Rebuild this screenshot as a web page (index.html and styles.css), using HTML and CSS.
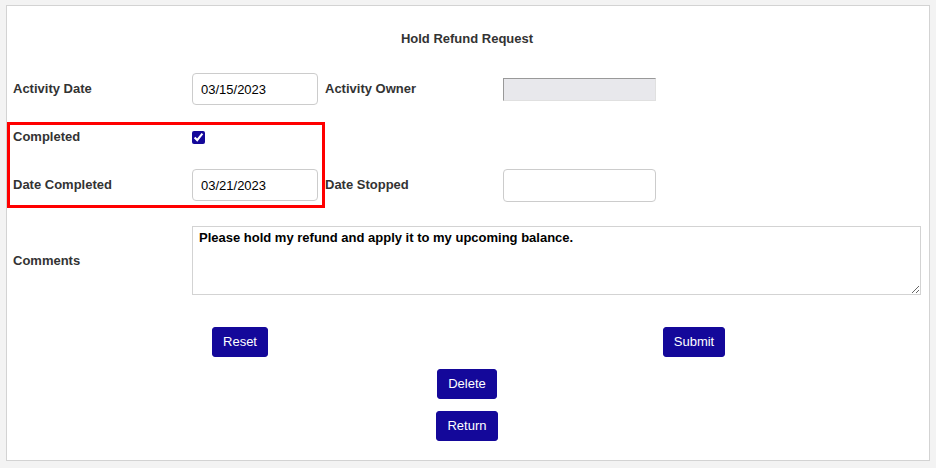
FILE: index.html
```html
<!DOCTYPE html>
<html>
<head>
<meta charset="utf-8">
<link rel="stylesheet" href="styles.css">
</head>
<body>
<div class="page">
  <div class="card">
    <div class="title">Hold Refund Request</div>
    <div class="form">
      <label class="lbl">Activity Date</label>
      <div class="cell"><input class="field date" type="text" value="03/15/2023"></div>
      <label class="lbl">Activity Owner</label>
      <div class="cell"><input class="field owner" type="text" readonly></div>

      <label class="lbl">Completed</label>
      <div class="cell"><input class="check" type="checkbox" checked></div>
      <div></div>
      <div></div>

      <label class="lbl">Date Completed</label>
      <div class="cell"><input class="field date" type="text" value="03/21/2023"></div>
      <label class="lbl">Date Stopped</label>
      <div class="cell"><input class="field stopped" type="text"></div>

      <label class="lbl comments-lbl">Comments</label>
      <div class="comments-cell"><textarea class="comments">Please hold my refund and apply it to my upcoming balance.</textarea></div>
    </div>
    <div class="actions">
      <div class="half"><button class="btn">Reset</button></div>
      <div class="half"><button class="btn">Submit</button></div>
    </div>
    <div class="center-row"><button class="btn">Delete</button></div>
    <div class="center-row"><button class="btn">Return</button></div>
    <div class="highlight"></div>
  </div>
</div>
</body>
</html>
```

FILE: styles.css
```css
html, body {
  margin: 0;
  padding: 0;
  background: #f3f3f3;
  font-family: "Liberation Sans", Arial, sans-serif;
}

.page {
  padding: 5px 6px;
  width: 936px;
  height: 468px;
  box-sizing: border-box;
}

.card {
  position: relative;
  box-sizing: border-box;
  width: 924px;
  height: 456px;
  background: #fff;
  border: 1px solid #d3d3d3;
  padding: 25px 8px 0 6px;
}

.title {
  text-align: center;
  font-size: 13px;
  font-weight: bold;
  line-height: 15px;
  color: #333;
  margin-bottom: 19px;
}

.form {
  display: grid;
  grid-template-columns: 179px 133px 178px 1fr;
  grid-template-rows: 48px 48px 48px auto;
  align-items: center;
}

.lbl {
  font-size: 13px;
  font-weight: bold;
  color: #333;
  margin-top: -1px;
}

.cell {
  display: flex;
  align-items: center;
}

.field {
  box-sizing: border-box;
  font-family: "Liberation Sans", Arial, sans-serif;
  font-size: 13px;
  color: #000;
  border: 1px solid #ccc;
  border-radius: 4px;
  padding: 0 8px;
  margin: 0;
  outline: none;
}

.date {
  width: 126px;
  height: 32px;
}

.owner {
  width: 153px;
  height: 23px;
  border-radius: 0;
  background: #e8e8ec;
  border-top: 1px solid #999;
  border-left: 1px solid #999;
  border-right: 1px solid #e0e0e0;
  border-bottom: 1px solid #e0e0e0;
}

.stopped {
  width: 153px;
  height: 33px;
}

.check {
  width: 13px;
  height: 13px;
  margin: 1px 0 0 0;
  accent-color: #14089a;
}

.comments-lbl {
  margin-top: 16px;
}

.comments-cell {
  grid-column: 2 / 5;
  margin-top: 17px;
  display: flex;
}

.comments {
  box-sizing: border-box;
  width: 100%;
  height: 69px;
  border: 1px solid #d3d3d3;
  border-radius: 0;
  padding: 3px 6px;
  margin: 0;
  font-family: "Liberation Sans", Arial, sans-serif;
  font-size: 13px;
  font-weight: bold;
  color: #000;
  outline: none;
}

.actions {
  display: grid;
  grid-template-columns: 1fr 1fr;
  margin-top: 32px;
}

.half {
  display: flex;
  justify-content: center;
}

.center-row {
  display: flex;
  justify-content: center;
  margin-top: 12px;
}

.btn {
  box-sizing: border-box;
  height: 30px;
  padding: 0 10px;
  background: #14089a;
  color: #fff;
  border: 1px solid #14089a;
  border-radius: 3px;
  font-family: "Liberation Sans", Arial, sans-serif;
  font-size: 13px;
  line-height: 28px;
  cursor: pointer;
}

.highlight {
  position: absolute;
  left: 0;
  top: 116px;
  width: 318px;
  height: 86px;
  box-sizing: border-box;
  border: 3px solid #ff0000;
  pointer-events: none;
}
```
